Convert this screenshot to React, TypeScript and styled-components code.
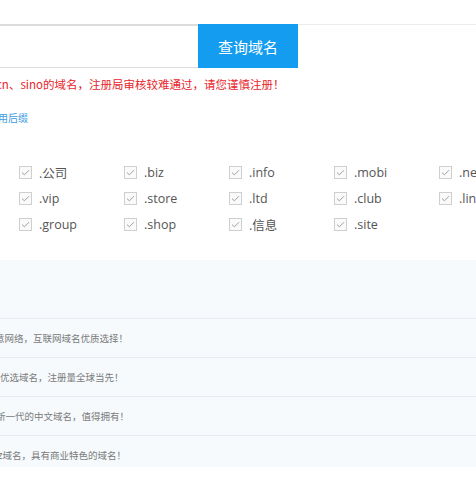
import styled, { createGlobalStyle } from "styled-components";

const GlobalStyle = createGlobalStyle`
  html, body {
    margin: 0;
    padding: 0;
    background: #ffffff;
    overflow: hidden;
  }
  body {
    font-family: "Open Sans", "Noto Sans CJK SC", sans-serif;
  }
`;

const suffixes = [
  ".公司", ".biz", ".info", ".mobi", ".net",
  ".vip", ".store", ".ltd", ".club", ".link",
  ".group", ".shop", ".信息", ".site",
];

const intros = [
  { text: "意网络，互联网域名优质选择！", shift: -5 },
  { text: "优选域名，注册量全球当先！", shift: 0 },
  { text: "新一代的中文域名，值得拥有！", shift: -4 },
  { text: "z域名，具有商业特色的域名！", shift: -2 },
];

const CheckIcon = () => (
  <svg width="9" height="7" viewBox="0 0 9 7">
    <path d="M1 3.6 L3.4 5.8 L8 1.2" fill="none" stroke="#a0a0a0" strokeWidth="1" />
  </svg>
);

const App = () => {
  return (
    <Page>
      <GlobalStyle />
      <SearchBar>
        <SearchInput />
        <SearchButton>查询域名</SearchButton>
        <SearchRest />
      </SearchBar>
      <Warning>cn、sino的域名，注册局审核较难通过，请您谨慎注册！</Warning>
      <SuffixLink>常用后缀</SuffixLink>
      <SuffixGrid>
        {suffixes.map((s) => (
          <SuffixItem key={s}>
            <Box>
              <CheckIcon />
            </Box>
            <span>{s}</span>
          </SuffixItem>
        ))}
      </SuffixGrid>
      <IntroPanel>
        <PanelHead />
        {intros.map((r) => (
          <IntroRow key={r.text}>
            <IntroText $shift={r.shift}>{r.text}</IntroText>
          </IntroRow>
        ))}
      </IntroPanel>
    </Page>
  );
};

export default App;

const Page = styled.div`
  width: 476px;
  height: 477px;
  overflow: hidden;
  background: #fff;
`;

const SearchBar = styled.div`
  margin-top: 24px;
  display: flex;
  height: 44px;
`;

const SearchInput = styled.div`
  width: 198px;
  box-sizing: border-box;
  border-top: 2px solid #dcdcdc;
  border-bottom: 1px solid #dedede;
`;

const SearchButton = styled.div`
  width: 100px;
  background: #139cf0;
  color: #fff;
  font-family: "Noto Sans CJK SC", sans-serif;
  font-size: 15px;
  display: flex;
  align-items: center;
  justify-content: center;
`;

const SearchRest = styled.div`
  flex: 1;
  border-top: 1px solid #ececec;
`;

const Warning = styled.div`
  margin-top: 6px;
  margin-left: -4px;
  height: 20px;
  line-height: 20px;
  font-size: 11.5px;
  color: #e8242b;
  font-family: "Noto Sans CJK SC", sans-serif;
  white-space: nowrap;
`;

const SuffixLink = styled.div`
  margin-top: 16px;
  margin-left: -12px;
  height: 16px;
  line-height: 16px;
  font-size: 10px;
  color: #3d9be0;
  font-family: "Noto Sans CJK SC", sans-serif;
`;

const SuffixGrid = styled.div`
  margin-top: 33px;
  padding-left: 19px;
  display: grid;
  grid-template-columns: repeat(5, 105px);
  grid-auto-rows: 26px;
`;

const SuffixItem = styled.label`
  display: flex;
  align-items: center;
  gap: 7px;
  font-size: 12.5px;
  color: #555;
  white-space: nowrap;
`;

const Box = styled.span`
  width: 13px;
  height: 13px;
  box-sizing: border-box;
  border: 1px solid #cfcfcf;
  background: #fafafa;
  display: flex;
  align-items: center;
  justify-content: center;
  flex-shrink: 0;
`;

const IntroPanel = styled.div`
  margin-top: 23px;
  background: #f6fafd;
`;

const PanelHead = styled.div`
  height: 58px;
`;

const IntroRow = styled.div`
  height: 39px;
  box-sizing: border-box;
  border-top: 1px solid #e6ecf1;
  display: flex;
  align-items: center;
  &:last-child {
    height: 32px;
    align-items: flex-end;
    padding-bottom: 5px;
  }
`;

const IntroText = styled.span<{ $shift: number }>`
  margin-left: ${(p) => p.$shift}px;
  font-size: 9.5px;
  color: #7a7a7a;
  font-family: "Noto Sans CJK SC", sans-serif;
  white-space: nowrap;
`;
